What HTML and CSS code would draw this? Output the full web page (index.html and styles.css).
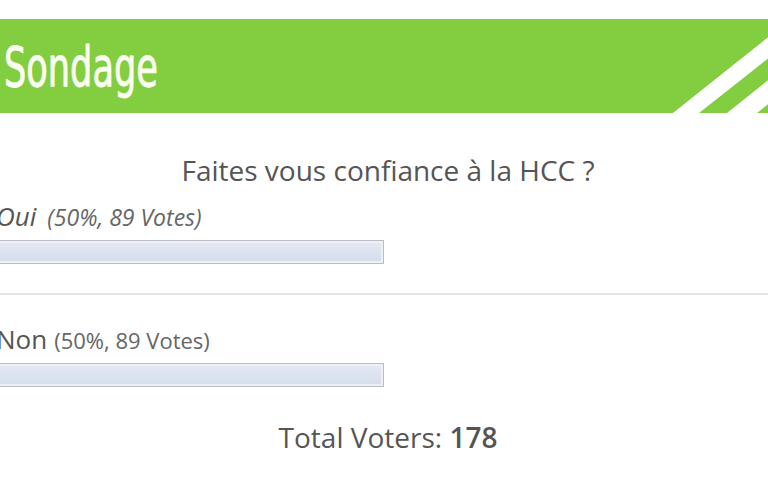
FILE: index.html
```html
<!DOCTYPE html>
<html>
  <head>
    <link rel="stylesheet" href="styles.css">
  </head>
  <body>
    <div class="poll">
      <header class="poll-head">
        <h2>Sondage</h2>
        <svg class="stripes" viewBox="0 0 100 94" width="100" height="94">
          <polygon points="5,94 123,0 150,0 31,94" fill="#fff" />
          <polygon points="59,94 177,0 207,0 89,94" fill="#fff" />
        </svg>
      </header>

      <div class="poll-body">
        <p class="question">Faites vous confiance à la HCC ?</p>

        <div class="answer voted">
          <div class="label">
            <span class="choice">Oui</span>
            <span class="count">(50%, 89 Votes)</span>
          </div>
          <div class="bar"><div class="fill" style="width: 100%"></div></div>
        </div>

        <div class="answer">
          <div class="label">
            <span class="choice">Non</span>
            <span class="count">(50%, 89 Votes)</span>
          </div>
          <div class="bar"><div class="fill" style="width: 100%"></div></div>
        </div>

        <p class="total">Total Voters: <b>178</b></p>
      </div>
    </div>
  </body>
</html>
```

FILE: styles.css
```css
body {
  margin: 0;
  background: #fff;
  font-family: "Open Sans", "Liberation Sans", sans-serif;
  color: #555;
}

.poll-head {
  position: relative;
  overflow: hidden;
  margin-top: 19px;
  height: 94px;
  background: #83cd41;
  display: flex;
  align-items: center;
}

.poll-head h2 {
  margin: 2px 0 0 4px;
  font-family: "Liberation Sans Narrow", "DejaVu Sans Condensed", sans-serif;
  font-weight: normal;
  font-size: 55px;
  -webkit-text-stroke: 0.9px #fbfff2;
  color: #fbfff2;
  transform: scaleX(0.71);
  transform-origin: left center;
}

/* decorative stripes on the right */
.stripes {
  position: absolute;
  right: 0;
  bottom: 0;
}

.poll-body {
  padding-top: 40px;
}

.question {
  margin: 0 0 12px;
  text-align: center;
  font-size: 28px;
  line-height: 34px;
  padding-left: 8px;
}

.answer {
  margin-left: -4px;
}

.answer.voted {
  padding-bottom: 29px;
  border-bottom: 2px solid #e4e4e4;
}

.answer + .answer {
  padding-top: 27px;
}

.label {
  height: 34px;
  line-height: 34px;
  font-size: 27px;
  margin-bottom: 7px;
  white-space: nowrap;
}

.choice {
  font-size: 26px;
}

.voted .choice {
  margin-right: 4px;
}

.count {
  font-size: 22px;
  color: #666;
}

.voted .label {
  font-style: italic;
}

.voted .count {
  font-size: 23px;
}

.bar {
  width: 388px;
  height: 24px;
  box-sizing: border-box;
  border: 1px solid #b9bdc6;
  background: #eef0f4;
  padding: 2px;
}

.fill {
  height: 100%;
  background: linear-gradient(#e3e8f3, #d6deec);
}

.total {
  margin: 33px 0 0;
  text-align: center;
  font-size: 28px;
  line-height: 34px;
  padding-left: 8px;
}

.total b {
  font-weight: 600;
}
```
